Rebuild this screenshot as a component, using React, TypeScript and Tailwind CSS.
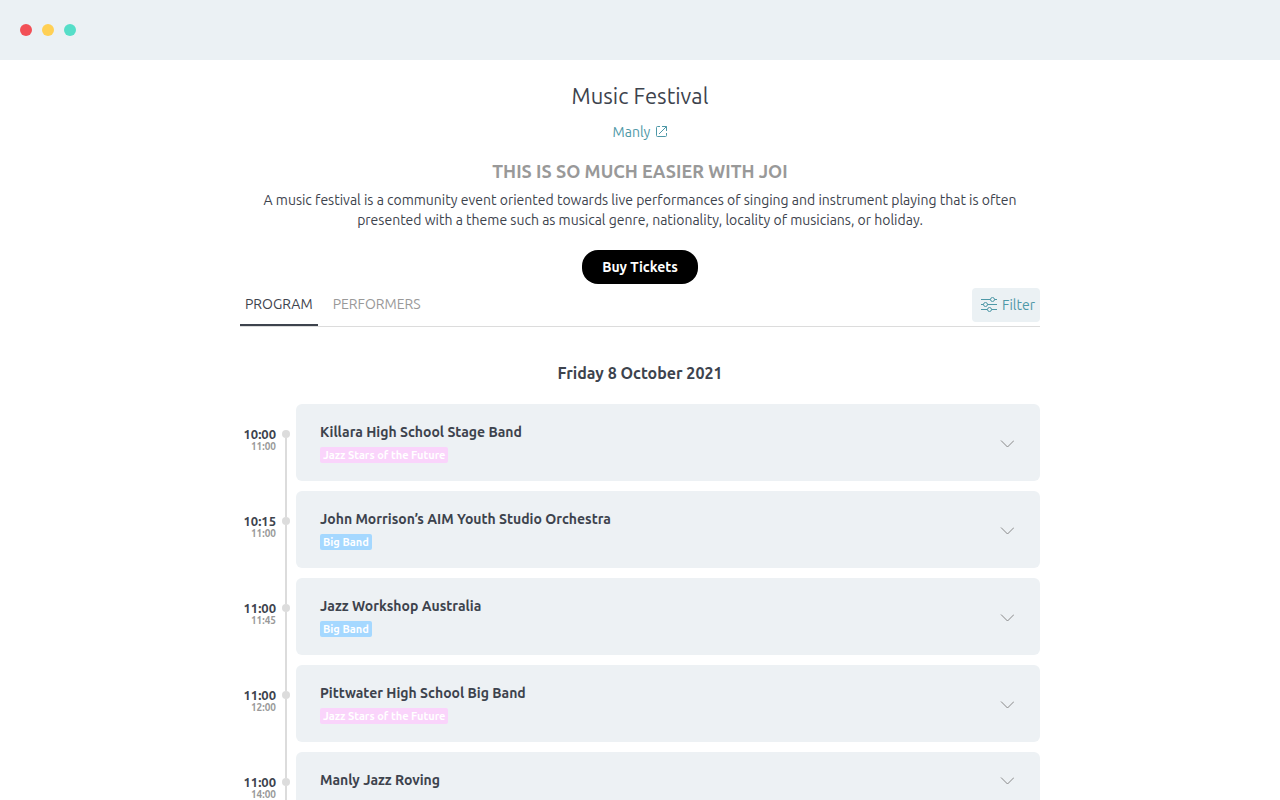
import React from 'react';

interface Tag {
  label: string;
  className: string;
}

interface ProgramItem {
  start: string;
  end: string;
  title: string;
  tag?: Tag;
}

const jazzStars: Tag = { label: 'Jazz Stars of the Future', className: 'bg-[#fad4fb]' };
const bigBand: Tag = { label: 'Big Band', className: 'bg-[#a5d8ff]' };

const program: ProgramItem[] = [
  { start: '10:00', end: '11:00', title: 'Killara High School Stage Band', tag: jazzStars },
  { start: '10:15', end: '11:00', title: 'John Morrison’s AIM Youth Studio Orchestra', tag: bigBand },
  { start: '11:00', end: '11:45', title: 'Jazz Workshop Australia', tag: bigBand },
  { start: '11:00', end: '12:00', title: 'Pittwater High School Big Band', tag: jazzStars },
  { start: '11:00', end: '14:00', title: 'Manly Jazz Roving' },
];

const ExternalLinkIcon = () => (
  <svg width="12" height="12" viewBox="0 0 12 12" fill="none" stroke="currentColor" strokeWidth="1" aria-hidden="true">
    <path d="M5 0.5H2.5a1 1 0 0 0-1 1v8a1 1 0 0 0 1 1h8a1 1 0 0 0 1-1V7" />
    <path d="M7 0.5h4.5V5M11.5 0.5L4 8" />
  </svg>
);

const FilterIcon = () => (
  <svg width="16" height="16" viewBox="0 0 16 16" fill="none" stroke="currentColor" strokeWidth="1" aria-hidden="true">
    <path d="M0 2.5h9.5M13.5 2.5H16M0 7.5h2.5M6.5 7.5H16M0 12.5h6.5M10.5 12.5H16" />
    <circle cx="11.5" cy="2.5" r="2" />
    <circle cx="4.5" cy="7.5" r="2" />
    <circle cx="8.5" cy="12.5" r="2" />
  </svg>
);

const ChevronIcon = () => (
  <svg width="14" height="10" viewBox="0 0 14 10" fill="none" stroke="currentColor" strokeWidth="1" aria-hidden="true">
    <path d="M1 2.5L7.5 9L14 2.5" />
  </svg>
);

const ProgramRow: React.FC<{ item: ProgramItem }> = ({ item }) => (
  <li className="group flex">
    <div className="w-9 pt-6 text-right font-bold">
      <div className="text-[13px] leading-3">{item.start}</div>
      <div className="text-[10px] leading-[14px] text-[#999]">{item.end}</div>
    </div>
    {/* rail with the dot at the start time, reaching over the gap to the next row */}
    <div className="w-5 -mb-2.5 flex flex-col items-center">
      <span className="h-[26px] w-0.5 bg-[#dcdcdc] group-first:bg-transparent" />
      <span className="size-2 rounded-full bg-[#dcdcdc]" />
      <span className="flex-1 w-0.5 bg-[#dcdcdc]" />
    </div>
    <button type="button" className="flex-1 flex items-center justify-between rounded-md bg-[#edf1f4] py-[18px] pl-6 pr-[26px] text-left">
      <span className="flex flex-col items-start gap-[5px]">
        <span className="text-sm leading-5 font-bold">{item.title}</span>
        {item.tag && (
          <span className={`rounded-xs px-[3px] text-[11px] leading-4 font-bold text-white ${item.tag.className}`}>
            {item.tag.label}
          </span>
        )}
      </span>
      <span className="text-[#888]">
        <ChevronIcon />
      </span>
    </button>
  </li>
);

export default function App() {
  return (
    <div className="min-h-screen bg-white text-[#3d434d] font-['Ubuntu','Noto_Sans',sans-serif]">
      <header className="flex items-center gap-2.5 h-15 px-5 bg-[#ebf1f4]">
        <span className="size-3 rounded-full bg-[#f25056]" />
        <span className="size-3 rounded-full bg-[#ffd054]" />
        <span className="size-3 rounded-full bg-[#55dec8]" />
      </header>

      <main className="max-w-[800px] mx-auto pt-5 pb-10">
        <div className="flex flex-col items-center text-center">
          <h1 className="text-[22px] leading-8">Music Festival</h1>
          <a href="#manly" className="flex items-center gap-[5px] mt-2.5 text-sm leading-5 text-[#4e98a7]">
            Manly
            <ExternalLinkIcon />
          </a>
          <h2 className="mt-[17px] text-lg leading-6 font-bold text-[#999]">THIS IS SO MUCH EASIER WITH JOI</h2>
          <p className="mt-[7px] text-sm leading-5">
            A music festival is a community event oriented towards live performances of singing and instrument playing that is often
            presented with a theme such as musical genre, nationality, locality of musicians, or holiday.
          </p>
          <button type="button" className="mt-5 h-[34px] px-5 rounded-2xl bg-black text-sm font-bold text-white">
            Buy Tickets
          </button>
        </div>

        <div className="flex items-start justify-between mt-1 border-b border-[#dcdcdc]">
          <nav className="flex gap-2.5 text-sm leading-8">
            <button type="button" className="px-[5px] pb-1 border-b-2 border-[#3d434d]">PROGRAM</button>
            <button type="button" className="px-[5px] pb-1 border-b-2 border-transparent text-[#999]">PERFORMERS</button>
          </nav>
          <button type="button" className="flex items-center gap-[5px] h-[34px] pl-[9px] pr-[5px] rounded bg-[#ebf1f4] text-sm text-[#4e98a7]">
            <FilterIcon />
            Filter
          </button>
        </div>

        <h3 className="mt-[34px] text-base leading-6 text-center font-bold">Friday 8 October 2021</h3>

        <ul className="flex flex-col gap-2.5 mt-[19px]">
          {program.map((item, idx) => (
            <ProgramRow key={idx} item={item} />
          ))}
        </ul>
      </main>
    </div>
  );
}
